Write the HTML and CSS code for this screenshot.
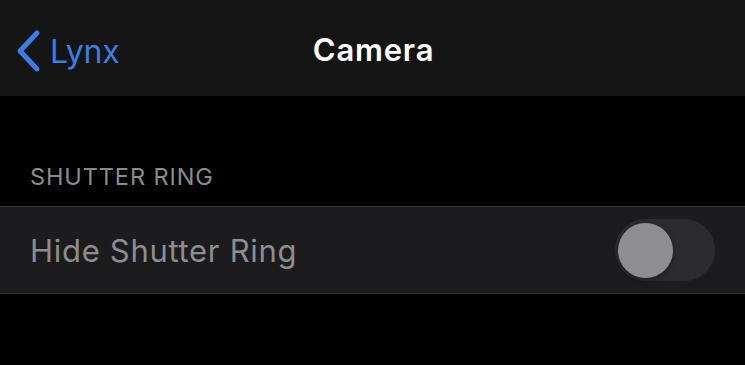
FILE: index.html
```html
<!DOCTYPE html>
<html>
<head>
<meta charset="utf-8">
<link rel="stylesheet" href="styles.css">
</head>
<body>
<header class="nav">
  <a class="back">
    <svg class="chev" width="28" height="44" viewBox="0 0 28 44"><path d="M22 4 L5 22 L22 40" fill="none" stroke="#3b7de4" stroke-width="5" stroke-linecap="round" stroke-linejoin="round"/></svg>
    <span class="back-label">Lynx</span>
  </a>
  <h1 class="title">Camera</h1>
</header>
<main class="content">
  <div class="section-header">SHUTTER RING</div>
  <div class="group">
    <div class="row">
      <span class="row-label">Hide Shutter Ring</span>
      <span class="toggle"><span class="knob"></span></span>
    </div>
  </div>
</main>
</body>
</html>
```
FILE: styles.css
```css
html, body {
  margin: 0;
  padding: 0;
  background: #000;
  width: 745px;
  height: 365px;
  overflow: hidden;
  font-family: Inter, "Noto Sans", sans-serif;
}
.nav {
  position: relative;
  height: 96px;
  background: #151515;
  display: flex;
  align-items: center;
  justify-content: center;
}
.back {
  position: absolute;
  left: 15px;
  top: 29px;
  display: flex;
  align-items: center;
  gap: 7px;
  color: #3b7de4;
}
.chev { display: block; }
.back-label {
  font-size: 32px;
  font-weight: 400;
  letter-spacing: -0.2px;
}
.title {
  margin: 0;
  color: #fff;
  font-size: 31px;
  font-weight: 600;
  letter-spacing: 0.8px;
  padding-left: 2px;
  padding-top: 3px;
}
.content {
  padding-top: 66px;
}
.section-header {
  padding-left: 30px;
  color: #8b8b8f;
  font-size: 23.5px;
  line-height: 30px;
  letter-spacing: 0.9px;
  height: 44px;
}
.group {
  background: #1c1c1e;
  border-top: 1px solid #333336;
  border-bottom: 1px solid #333336;
}
.row {
  height: 86px;
  display: flex;
  align-items: center;
  justify-content: space-between;
  padding: 0 30px 0 30px;
}
.row-label {
  color: #8d8d91;
  font-size: 31px;
  letter-spacing: 0.7px;
}
.toggle {
  position: relative;
  width: 100px;
  height: 62px;
  border-radius: 31px;
  background: #2c2c2f;
}
.knob {
  position: absolute;
  left: 3px;
  top: 3.5px;
  width: 55px;
  height: 55px;
  border-radius: 50%;
  background: #8e8e92;
  box-shadow: 0 2px 5px rgba(0,0,0,0.35);
}
```
